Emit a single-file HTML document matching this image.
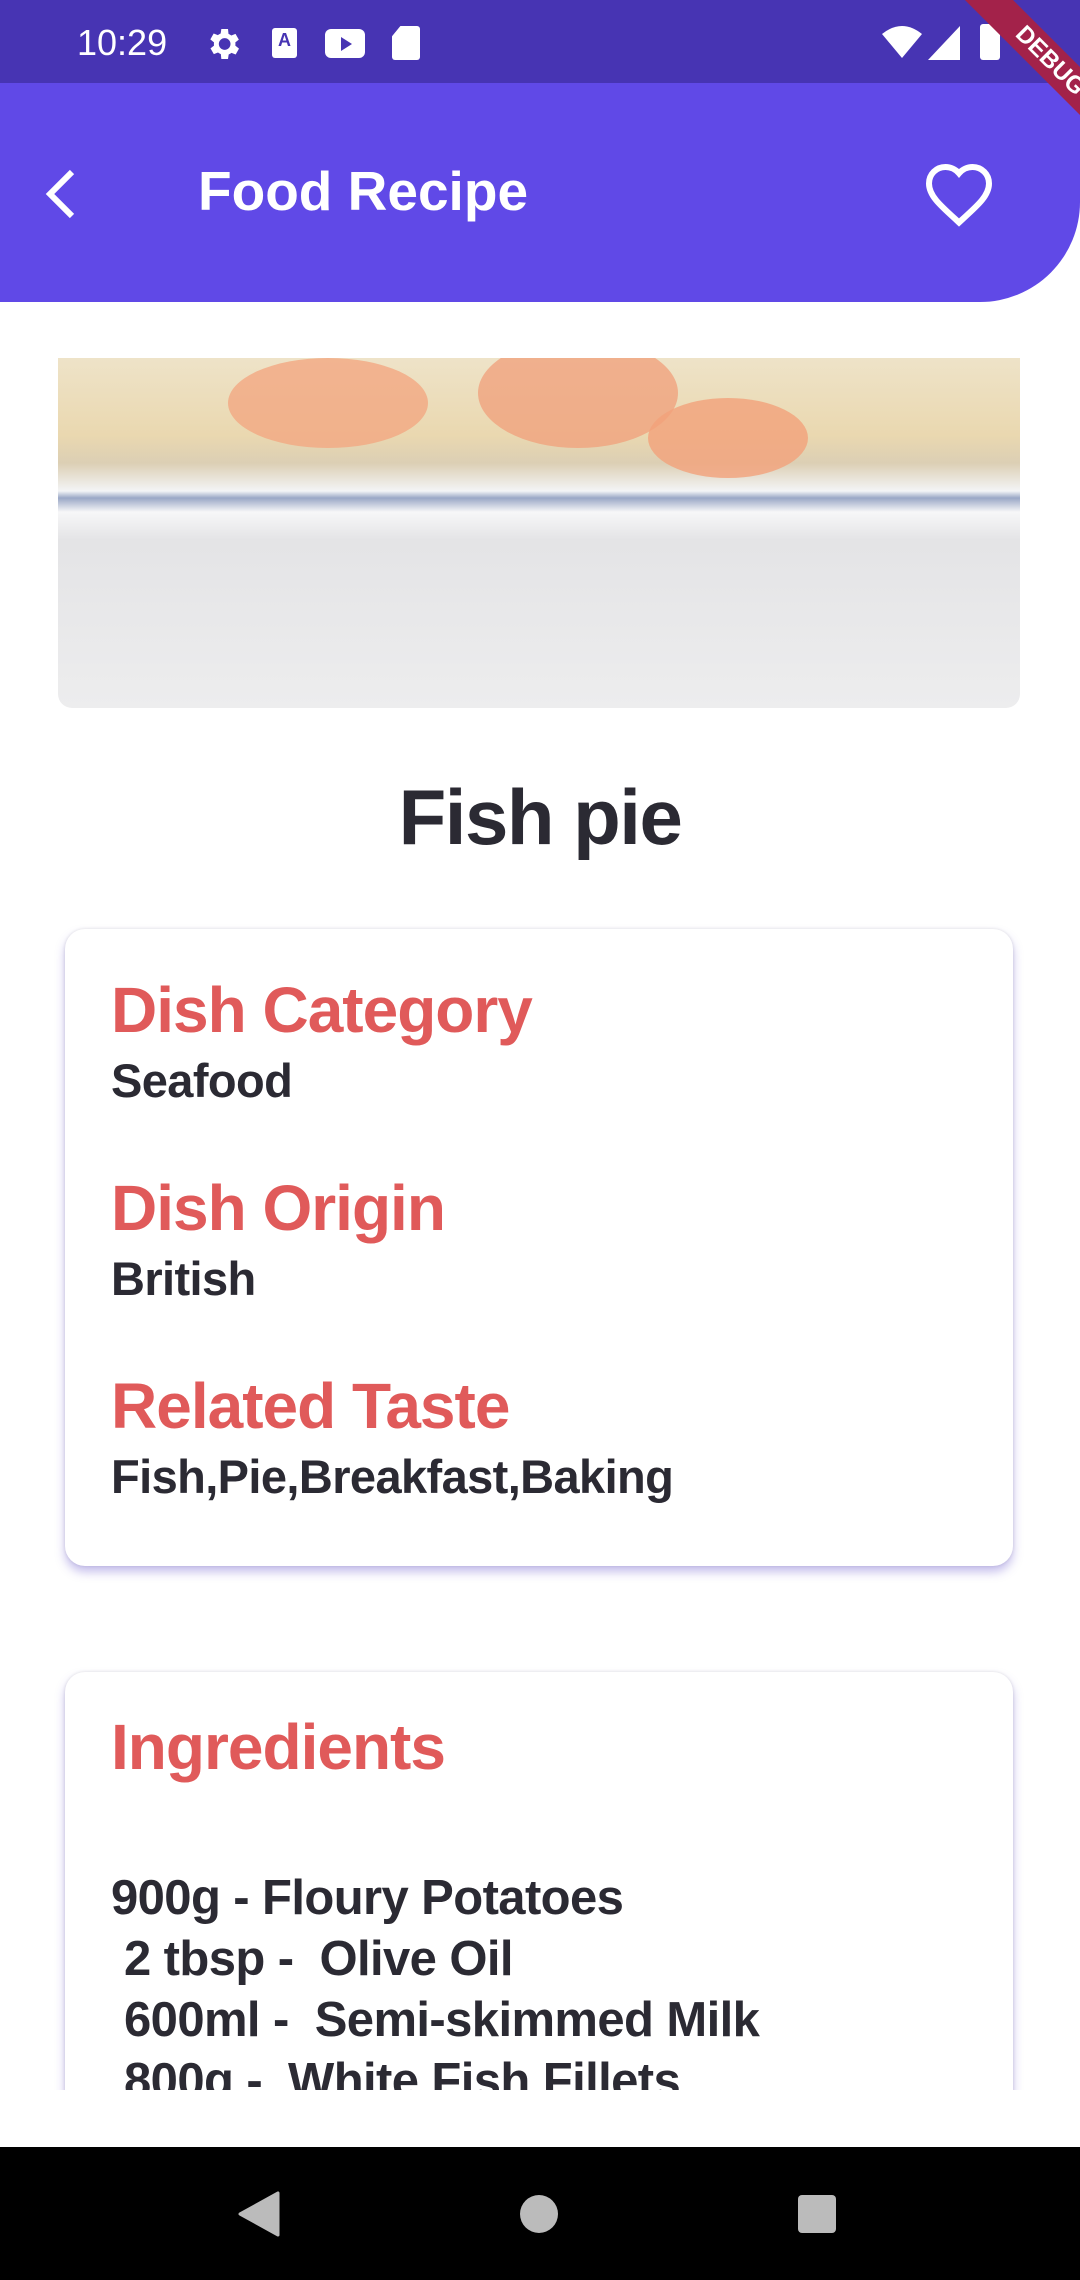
<!DOCTYPE html>
<html><head><meta charset="utf-8"><style>
*{margin:0;padding:0;box-sizing:border-box}
body{width:1080px;height:2280px;overflow:hidden;background:#fff;font-family:"Liberation Sans",sans-serif;position:relative}
.sb{position:absolute;left:0;top:0;width:1080px;height:83px;background:#4734b3;color:#fff}
.ab{position:absolute;left:0;top:83px;width:1080px;height:219px;background:#6049e7;border-bottom-right-radius:100px}
.t{position:absolute;color:#2b2a33;font-weight:bold;white-space:nowrap}
.r{color:#e05a5a;font-size:64px;letter-spacing:-1px}
.v{font-size:47px;letter-spacing:-0.6px}
.card{position:absolute;left:65px;width:948px;background:#fff;border-radius:20px;box-shadow:0 6px 10px rgba(90,70,200,0.35),0 0 3px rgba(0,0,0,0.12)}
</style></head><body>
<div class="sb">
<div style="position:absolute;left:77px;top:22px;font-size:36px">10:29</div>
<svg style="position:absolute;left:203px;top:24px" width="40" height="40" viewBox="0 0 24 24"><path fill="#fff" d="M19.4 13a7.5 7.5 0 000-2l2.1-1.6-2-3.5-2.5 1a7 7 0 00-1.7-1L15 3h-4l-.4 2.7a7 7 0 00-1.7 1l-2.5-1-2 3.5L6.6 11a7.5 7.5 0 000 2l-2.1 1.6 2 3.5 2.5-1a7 7 0 001.7 1L11 21h4l.4-2.7a7 7 0 001.7-1l2.5 1 2-3.5zM13 15.5a3.5 3.5 0 110-7 3.5 3.5 0 010 7z"/></svg>
<div style="position:absolute;left:272px;top:28px;width:25px;height:30px;background:#fff;border-radius:3px;color:#4734b3;font-size:18px;font-weight:bold;text-align:center;line-height:24px">A</div>
<div style="position:absolute;left:325px;top:29px;width:40px;height:29px;background:#fff;border-radius:6px"><div style="position:absolute;left:16px;top:8px;border-left:11px solid #4734b3;border-top:7px solid transparent;border-bottom:7px solid transparent"></div></div>
<div style="position:absolute;left:392px;top:26px;width:28px;height:34px;background:#fff;border-radius:3px;clip-path:polygon(30% 0,100% 0,100% 100%,0 100%,0 30%)"></div>
<svg style="position:absolute;left:882px;top:26px" width="40" height="34" viewBox="0 0 40 34"><path fill="#fff" d="M20 32L0 8Q20-8 40 8z"/></svg>
<svg style="position:absolute;left:928px;top:26px" width="32" height="34" viewBox="0 0 32 34"><path fill="#fff" d="M32 0V34H0z"/></svg>
<div style="position:absolute;left:980px;top:24px;width:20px;height:36px;background:#fff;border-radius:3px"></div>
</div>
<div class="ab">
<svg style="position:absolute;left:40px;top:85px" width="40" height="52" viewBox="0 0 40 52"><path d="M32 4L10 26l22 22" fill="none" stroke="#fff" stroke-width="6"/></svg>
<div style="position:absolute;left:198px;top:76px;font-size:55px;color:#fff;font-weight:bold">Food Recipe</div>
<svg style="position:absolute;left:922px;top:78px" width="74" height="66" viewBox="0 0 24 22"><path d="M12 20.5l-1.4-1.3C5.4 14.5 2 11.4 2 7.5 2 4.4 4.4 2 7.5 2c1.7 0 3.4.8 4.5 2.1C13.1 2.8 14.8 2 16.5 2 19.6 2 22 4.4 22 7.5c0 3.9-3.4 7-8.6 11.7z" fill="none" stroke="#fff" stroke-width="2"/></svg>
</div>
<div style="position:absolute;left:900px;top:0;width:180px;height:160px;overflow:hidden;pointer-events:none"><div style="position:absolute;left:30px;top:44px;width:240px;height:34px;background:#a3224a;transform:rotate(45deg);color:#fff;font-size:24px;font-weight:bold;text-align:center;line-height:34px">DEBUG</div></div>
<div style="position:absolute;left:58px;top:358px;width:962px;height:350px;border-radius:0 0 14px 14px;overflow:hidden;background:linear-gradient(180deg,#eee3c8 0%,#ead8b0 22%,#dccfb4 30%,#f3f4f6 38%,#9aa7c6 40%,#f7f7f8 44%,#e4e4e6 52%,#ededee 100%)">
<div style="position:absolute;left:170px;top:0;width:200px;height:90px;border-radius:50%;background:#f2a882;opacity:.8"></div>
<div style="position:absolute;left:420px;top:-20px;width:200px;height:110px;border-radius:50%;background:#f0a27e;opacity:.8"></div>
<div style="position:absolute;left:590px;top:40px;width:160px;height:80px;border-radius:50%;background:#f3a17a;opacity:.8"></div>
</div>
<div class="t" style="left:0;width:1080px;text-align:center;top:772px;font-size:78px;letter-spacing:-1.5px">Fish pie</div>
<div class="card" style="top:929px;height:637px">
<div class="t r" style="left:46px;top:44px">Dish Category</div>
<div class="t v" style="left:46px;top:124px">Seafood</div>
<div class="t r" style="left:46px;top:242px">Dish Origin</div>
<div class="t v" style="left:46px;top:322px">British</div>
<div class="t r" style="left:46px;top:440px">Related Taste</div>
<div class="t v" style="left:46px;top:520px">Fish,Pie,Breakfast,Baking</div>
</div>
<div style="position:absolute;left:0;top:1660px;width:1080px;height:430px;overflow:hidden">
<div class="card" style="top:12px;height:600px">
<div class="t r" style="left:46px;top:38px">Ingredients</div>
<div class="t v" style="left:46px;top:196px;line-height:61px;font-size:49px">900g - Floury Potatoes<br>&nbsp;2 tbsp - &nbsp;Olive Oil<br>&nbsp;600ml - &nbsp;Semi-skimmed Milk<br>&nbsp;800g - &nbsp;White Fish Fillets</div>
</div></div>
<div style="position:absolute;left:0;top:2147px;width:1080px;height:133px;background:#000">
<svg style="position:absolute;left:238px;top:44px" width="42" height="46" viewBox="0 0 42 46"><path d="M40 2V44L2 23z" fill="#bbb" stroke="#bbb" stroke-width="3" stroke-linejoin="round"/></svg>
<div style="position:absolute;left:520px;top:48px;width:38px;height:38px;border-radius:50%;background:#bbb"></div>
<div style="position:absolute;left:798px;top:48px;width:38px;height:38px;border-radius:4px;background:#bbb"></div>
</div>
</body></html>
